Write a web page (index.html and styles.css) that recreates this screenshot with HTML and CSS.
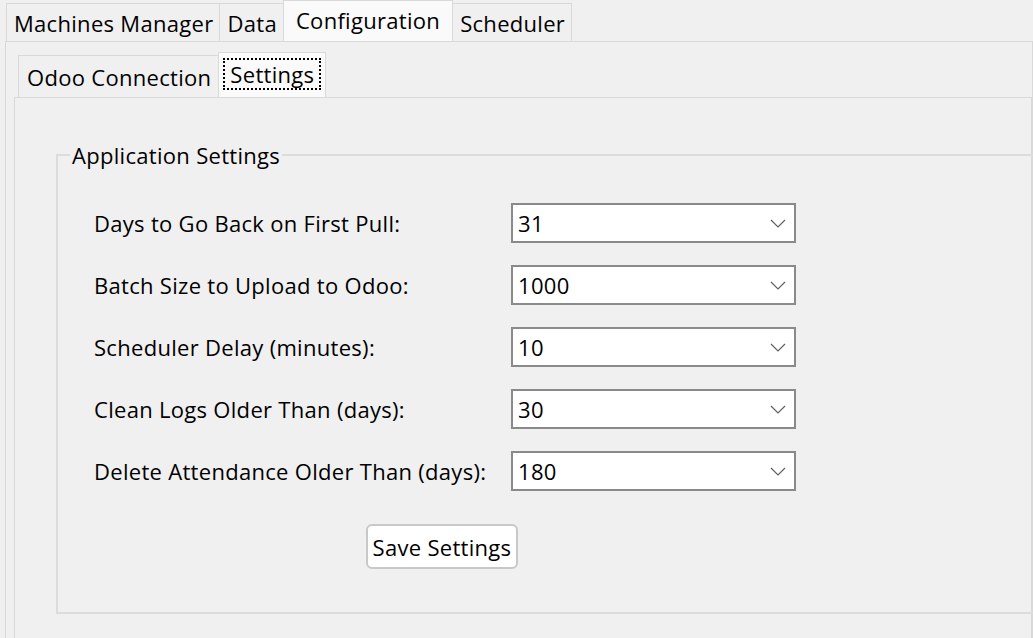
FILE: index.html
```html
<!DOCTYPE html>
<html>
<head>
<meta charset="utf-8">
<link rel="stylesheet" href="styles.css">
</head>
<body>
<div class="app">
  <div class="tabbar outer-tabs">
    <div class="tab">Machines Manager</div>
    <div class="tab">Data</div>
    <div class="tab selected">Configuration</div>
    <div class="tab">Scheduler</div>
  </div>
  <div class="pane outer-pane">
    <div class="tabbar inner-tabs">
      <div class="tab">Odoo Connection</div>
      <div class="tab selected"><span class="focus">Settings</span></div>
    </div>
    <div class="pane inner-pane">
      <fieldset class="group">
        <legend>Application Settings</legend>
        <div class="form">
          <label class="lbl">Days to Go Back on First Pull:</label>
          <div class="combo"><span>31</span><svg class="chev" viewBox="0 0 16 9" width="16" height="9"><path d="M1 1 L8 8 L15 1" fill="none" stroke="#606060" stroke-width="1.2"/></svg></div>
          <label class="lbl">Batch Size to Upload to Odoo:</label>
          <div class="combo"><span>1000</span><svg class="chev" viewBox="0 0 16 9" width="16" height="9"><path d="M1 1 L8 8 L15 1" fill="none" stroke="#606060" stroke-width="1.2"/></svg></div>
          <label class="lbl">Scheduler Delay (minutes):</label>
          <div class="combo"><span>10</span><svg class="chev" viewBox="0 0 16 9" width="16" height="9"><path d="M1 1 L8 8 L15 1" fill="none" stroke="#606060" stroke-width="1.2"/></svg></div>
          <label class="lbl">Clean Logs Older Than (days):</label>
          <div class="combo"><span>30</span><svg class="chev" viewBox="0 0 16 9" width="16" height="9"><path d="M1 1 L8 8 L15 1" fill="none" stroke="#606060" stroke-width="1.2"/></svg></div>
          <label class="lbl">Delete Attendance Older Than (days):</label>
          <div class="combo"><span>180</span><svg class="chev" viewBox="0 0 16 9" width="16" height="9"><path d="M1 1 L8 8 L15 1" fill="none" stroke="#606060" stroke-width="1.2"/></svg></div>
        </div>
        <div class="actions">
          <button class="btn">Save Settings</button>
        </div>
      </fieldset>
    </div>
  </div>
</div>
</body>
</html>
```

FILE: styles.css
```css
html, body {
  margin: 0;
  padding: 0;
  background: #f0f0f0;
  overflow: hidden;
  width: 1033px;
  height: 638px;
}
body {
  font-family: "Open Sans", "Noto Sans", sans-serif;
  font-size: 22px;
  letter-spacing: 0.3px;
  color: #000;
}
.app {
  width: 1033px;
  height: 638px;
  overflow: hidden;
}
.tabbar {
  display: flex;
  align-items: flex-end;
}
.outer-tabs {
  height: 41px;
  padding-left: 6px;
}
.tab {
  box-sizing: border-box;
  height: 38px;
  border: 1px solid #d9d9d9;
  border-bottom: none;
  background: #f0f0f0;
  padding: 0 6px 0 7px;
  display: flex;
  align-items: center;
  white-space: nowrap;
  margin-right: -1px;
}
.tab.selected {
  height: 41px;
  background: #fafafa;
  position: relative;
  z-index: 1;
  padding: 0 12px 3px;
}
.pane {
  border: 1px solid #d9d9d9;
  background: #f0f0f0;
}
.outer-pane {
  margin-left: 5px;
  height: 640px;
  padding: 10px 0 0 8px;
}
.inner-tabs {
  height: 45px;
  padding-left: 4px;
}
.inner-tabs .tab {
  height: 42px;
  padding: 0 7px 0 8px;
}
.inner-tabs .tab.selected {
  height: 45px;
  padding: 0 7px 2px;
}
.focus {
  outline: 2px dotted #000;
  outline-offset: 1px;
  line-height: 26px;
  padding: 0 4px;
}
.inner-pane {
  height: 600px;
  padding: 0 0 0 41px;
}
.group {
  margin: 43px 0 0 0;
  border: 2px solid #dcdcdc;
  border-right: none;
  padding: 34px 0 43px 12px;
  width: 1100px;
}
.group legend {
  padding: 0 2px;
  margin: 0;
  line-height: 28px;
}
.form {
  display: grid;
  grid-template-columns: 417px 285px;
  row-gap: 22px;
  align-items: center;
  width: 702px;
  margin-left: 24px;
}
.lbl {
  white-space: nowrap;
}
.combo {
  box-sizing: border-box;
  height: 40px;
  border: 2px solid #8a8a8a;
  background: #fff;
  display: flex;
  align-items: center;
  justify-content: space-between;
  padding: 0 8px 0 5px;
}
.chev {
  display: block;
}
.actions {
  width: 702px;
  margin-left: 24px;
  display: flex;
  justify-content: center;
  padding-top: 33px;
  padding-right: 6px;
  box-sizing: border-box;
}
.btn {
  font: inherit;
  letter-spacing: inherit;
  color: #000;
  height: 45px;
  width: 152px;
  background: #fff;
  border: 2px solid #c8c8c8;
  border-radius: 6px;
  padding: 0;
}
```
